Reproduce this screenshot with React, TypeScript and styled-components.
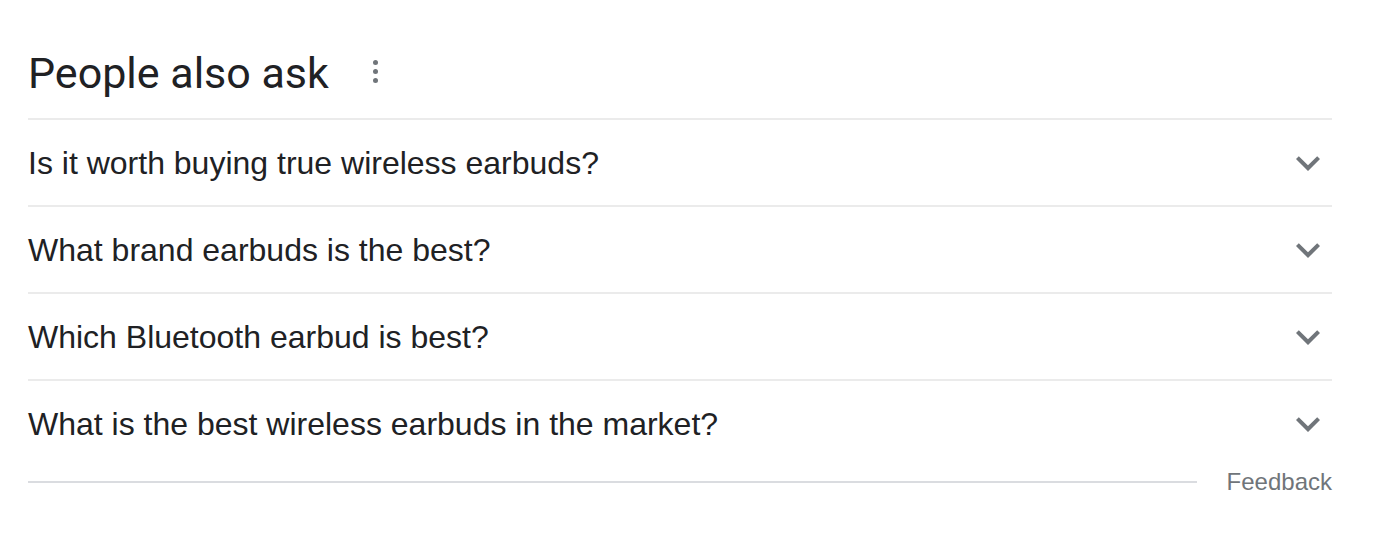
import React from 'react'
import styled, { createGlobalStyle } from 'styled-components';

const questions = [
  'Is it worth buying true wireless earbuds?',
  'What brand earbuds is the best?',
  'Which Bluetooth earbud is best?',
  'What is the best wireless earbuds in the market?',
];

const Chevron = () => (
  <svg width="48" height="48" viewBox="0 0 24 24" fill="#70757a">
    <path d="M7.41 8.59L12 13.17l4.59-4.58L18 10l-6 6-6-6 1.41-1.41z" />
  </svg>
);

export default function App(): JSX.Element {
  return <>
    <GlobalStyle />
    <Panel>
      <Header>
        <Title>People also ask</Title>
        <MoreButton aria-label="More options">
          <Dot /><Dot /><Dot />
        </MoreButton>
      </Header>
      {questions.map((q) => (
        <Row key={q}>
          <Question>{q}</Question>
          <Chevron />
        </Row>
      ))}
      <Footer>
        <FooterLine />
        <FeedbackLink>Feedback</FeedbackLink>
      </Footer>
    </Panel>
  </>;
}

const GlobalStyle = createGlobalStyle`
  body {
    margin: 0;
    background: #fff;
    font-family: "Liberation Sans", Arial, sans-serif;
  }
`;

const Panel = styled.div`
  width: 1304px;
  padding-left: 28px;
`;

const Header = styled.div`
  display: flex;
  align-items: center;
  height: 118px;
  padding-top: 28px;
  box-sizing: border-box;
`;

const Title = styled.h2`
  margin: 0;
  font-family: Roboto, "Open Sans", sans-serif;
  font-weight: 400;
  font-size: 43px;
  line-height: 56px;
  color: #202124;
`;

const MoreButton = styled.div`
  display: flex;
  flex-direction: column;
  align-items: center;
  gap: 4px;
  margin-left: 44px;
  margin-top: -4px;
`;

const Dot = styled.span`
  width: 5px;
  height: 5px;
  border-radius: 50%;
  background: #70757a;
`;

const Row = styled.div`
  display: flex;
  align-items: center;
  justify-content: space-between;
  height: 87px;
  box-sizing: border-box;
  border-top: 2px solid #ebebeb;
`;

const Question = styled.span`
  font-size: 32px;
  line-height: 40px;
  color: #202124;
`;

const Footer = styled.div`
  display: flex;
  align-items: center;
  margin-top: 1px;
`;

const FooterLine = styled.div`
  flex: 1;
  height: 2px;
  background: #dadce0;
  margin-right: 30px;
`;

const FeedbackLink = styled.span`
  font-size: 24px;
  line-height: 30px;
  color: #70757a;
`;
